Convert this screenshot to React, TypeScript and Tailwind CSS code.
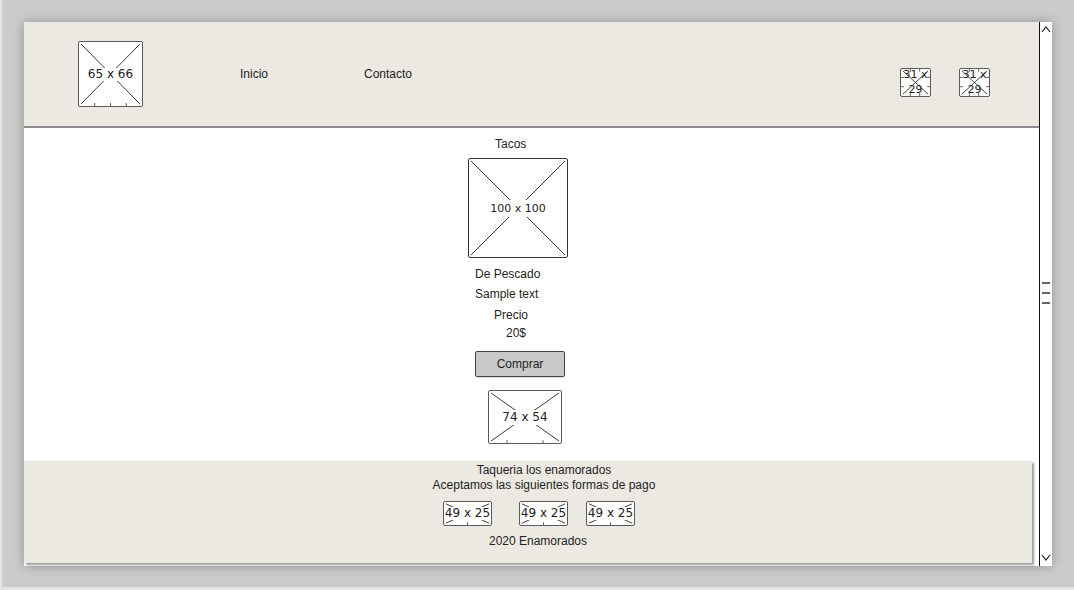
import React from "react";

type PhProps = {
  w: number;
  h: number;
  label: string;
  ticks?: number[];
  smallText?: boolean;
  className?: string;
  textClass?: string;
};

function Placeholder({ w, h, label, ticks = [0.25, 0.5, 0.75], smallText, className = "", textClass = "" }: PhProps) {
  return (
    <div
      className={`relative shrink-0 bg-white border-[1.5px] border-[#5a5a5a] rounded-[2px] flex items-center justify-center ${className}`}
      style={{ width: w, height: h }}
    >
      <svg className="absolute inset-0" width="100%" height="100%" viewBox={`0 0 ${w} ${h}`} preserveAspectRatio="none">
        <line x1="2" y1="2" x2={w - 2} y2={h - 2} stroke="#333" strokeWidth="1" />
        <line x1={w - 2} y1="2" x2="2" y2={h - 2} stroke="#333" strokeWidth="1" />
        {ticks.map((t) => (
          <line key={t} x1={w * t} y1={h - 3} x2={w * t} y2={h} stroke="#555" strokeWidth="1" />
        ))}
      </svg>
      <span
        className={`relative text-[#222] font-['DejaVu_Sans',sans-serif] leading-[13px] ${smallText ? "text-[11px]" : "text-[12px]"} ${textClass}`}
      >
        {label}
      </span>
    </div>
  );
}

function SmallIcon() {
  return (
    <div className="relative w-[31px] h-[29px] bg-white border-[1.5px] border-[#5a5a5a] rounded-[2px] shrink-0">
      <svg className="absolute inset-0" width="100%" height="100%" viewBox="0 0 31 29">
        <line x1="2" y1="2" x2="29" y2="27" stroke="#333" strokeWidth="1" />
        <line x1="29" y1="2" x2="2" y2="27" stroke="#333" strokeWidth="1" />
        <line x1="0" y1="9" x2="3" y2="9" stroke="#555" strokeWidth="1" />
        <line x1="0" y1="19" x2="3" y2="19" stroke="#555" strokeWidth="1" />
        <line x1="28" y1="9" x2="31" y2="9" stroke="#555" strokeWidth="1" />
        <line x1="28" y1="19" x2="31" y2="19" stroke="#555" strokeWidth="1" />
        <line x1="10" y1="26" x2="10" y2="29" stroke="#555" strokeWidth="1" />
        <line x1="20" y1="26" x2="20" y2="29" stroke="#555" strokeWidth="1" />
        <line x1="10" y1="0" x2="10" y2="3" stroke="#555" strokeWidth="1" />
        <line x1="20" y1="0" x2="20" y2="3" stroke="#555" strokeWidth="1" />
      </svg>
      <div className="relative flex flex-col items-center font-['DejaVu_Sans',sans-serif] text-[11px] leading-[12px] text-[#222]">
        <span>31 x</span>
        <span className="mt-[3px]">29</span>
      </div>
    </div>
  );
}

export default function App() {
  return (
    <div className="w-[1074px] h-[590px] bg-[#cbcbcb] border-l-[2px] border-b-[3px] border-[#e4e4e4] overflow-hidden font-['Liberation_Sans',Arial,sans-serif] text-[12px] text-[#1e1e1e]">
      <div className="pl-[22px] pt-[22px]">
        <div className="flex w-[1028px] h-[544px] shadow-[0_0_10px_rgba(0,0,0,0.28)]">
          {/* main column */}
          <div className="w-[1015px] h-full bg-white flex flex-col">
            {/* header */}
            <div className="h-[106px] bg-[#ECE9E3] border-b-2 border-[#8c8c8c] flex items-center shrink-0">
              <Placeholder w={65} h={66} label="65 x 66" className="ml-[54px]" textClass="bg-white px-[1px]" />
              <span className="ml-[97px] w-[124px]">Inicio</span>
              <span>Contacto</span>
              <div className="ml-auto mr-[49px] self-start mt-[46px] flex gap-[28px]">
                <SmallIcon />
                <SmallIcon />
              </div>
            </div>

            {/* content */}
            <div className="flex-1 flex flex-col items-start pl-[444px] leading-[16px]">
              <span className="mt-[8px] ml-[27px]">Tacos</span>
              <Placeholder w={100} h={100} label="100 x 100" ticks={[]} smallText className="mt-[6px] border-[#333]" textClass="bg-white py-[2px]" />
              <span className="mt-[8px] ml-[7px]">De Pescado</span>
              <span className="mt-[4px] ml-[7px]">Sample text</span>
              <span className="mt-[5px] ml-[26px]">Precio</span>
              <span className="mt-[2px] ml-[38px]">20$</span>
              <button className="mt-[10px] ml-[7px] w-[90px] h-[26px] bg-[#c9c9c9] border border-[#444] rounded-[2px] flex items-center justify-center text-[12px] text-[#222] shadow-[0_1px_1px_rgba(0,0,0,0.15)]">
                Comprar
              </button>
              <Placeholder w={74} h={54} label="74 x 54" ticks={[0.25, 0.75]} className="mt-[13px] ml-[20px]" textClass="bg-white py-[1px]" />
            </div>

            {/* footer */}
            <div className="h-[102px] w-[1008px] bg-[#ECE9E3] shrink-0 mb-[3px] shadow-[2px_2px_2px_rgba(0,0,0,0.4)] flex flex-col items-center pt-[2px] leading-[15px]">
              <span className="ml-[32px]">Taqueria los enamorados</span>
              <span className="ml-[32px]">Aceptamos las siguientes formas de pago</span>
              <div className="flex mt-[8px] ml-[22px]">
                <Placeholder w={49} h={25} label="49 x 25" ticks={[0.5]} textClass="bg-white" />
                <Placeholder w={49} h={25} label="49 x 25" ticks={[0.5]} className="ml-[27px]" textClass="bg-white" />
                <Placeholder w={49} h={25} label="49 x 25" ticks={[0.5]} className="ml-[18px]" textClass="bg-white" />
              </div>
              <span className="mt-[7px] ml-[20px] leading-[16px]">2020 Enamorados</span>
            </div>
          </div>

          {/* scrollbar */}
          <div className="w-[13px] h-full bg-white border-l border-[#111] flex flex-col items-center">
            <svg width="10" height="8" viewBox="0 0 10 8" className="mt-[3px]">
              <polyline points="1,7 5,2 9,7" fill="none" stroke="#222" strokeWidth="1.2" />
            </svg>
            <div className="flex-1 flex flex-col justify-center gap-[8px]">
              <div className="w-[8px] h-[2px] bg-[#666]" />
              <div className="w-[8px] h-[2px] bg-[#666]" />
              <div className="w-[8px] h-[2px] bg-[#666]" />
            </div>
            <svg width="10" height="8" viewBox="0 0 10 8" className="mb-[5px]">
              <polyline points="1,2 5,7 9,2" fill="none" stroke="#222" strokeWidth="1.2" />
            </svg>
          </div>
        </div>
      </div>
    </div>
  );
}
